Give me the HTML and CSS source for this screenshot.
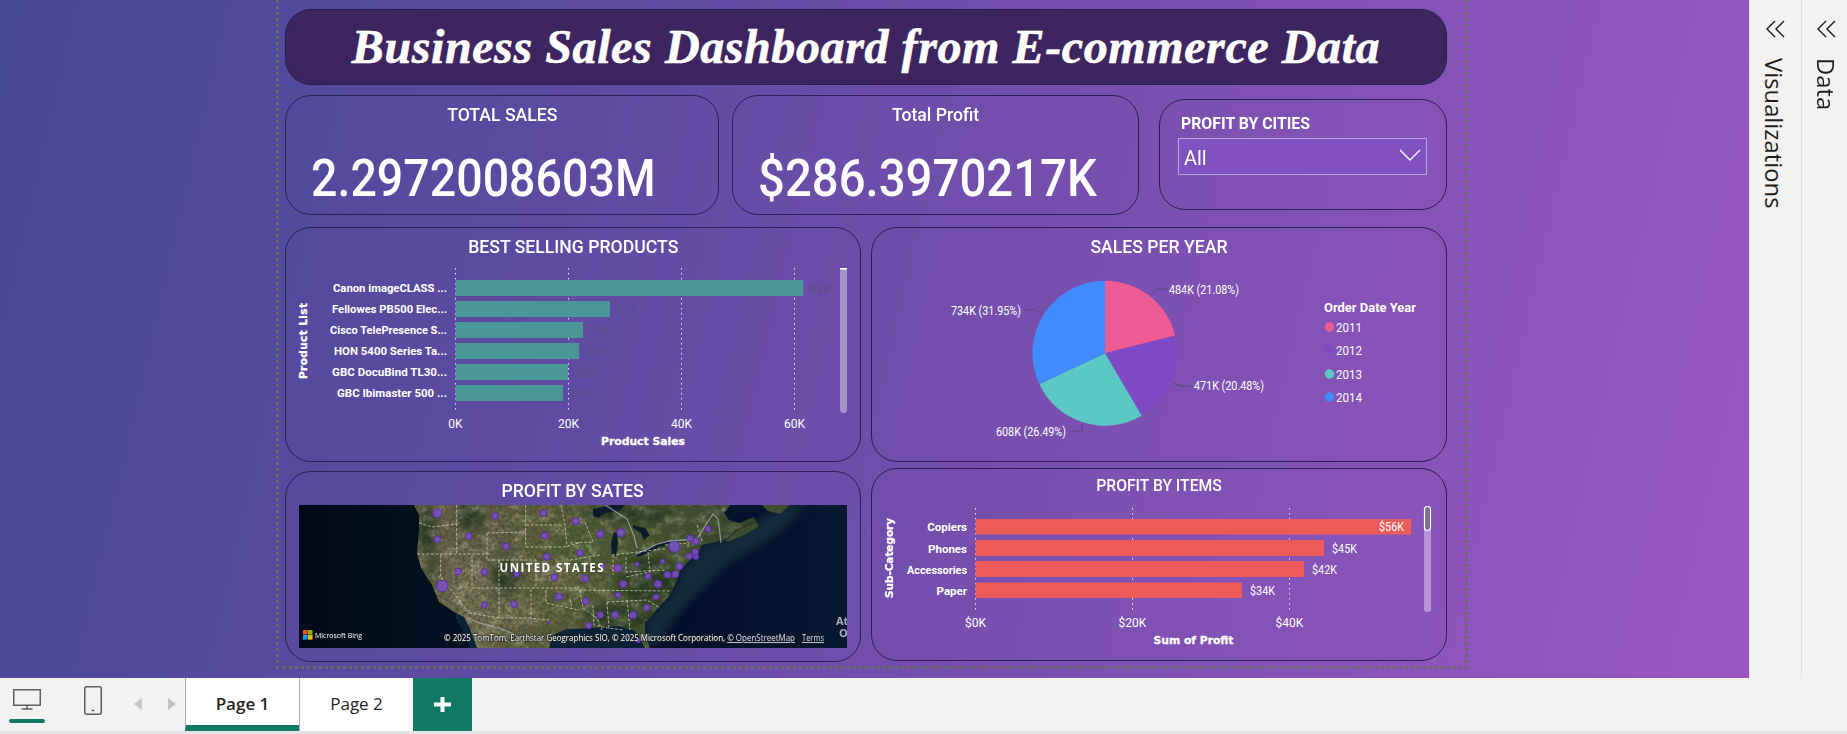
FILE: index.html
```html
<!DOCTYPE html>
<html lang="en">
<head>
<meta charset="utf-8">
<title>Business Sales Dashboard</title>
<link rel="stylesheet" href="styles.css">
</head>
<body>
<div class="app">
  <div class="workspace">
    <main class="canvas">
      <div class="page">
        <header class="banner card"><h1>Business Sales Dashboard from E-commerce Data</h1></header>

        <section class="row row-kpi">
          <article class="card kpi kpi-sales">
            <h2 class="kpi-label"><span>TOTAL SALES</span></h2>
            <p class="kpi-value"><span>2.2972008603M</span></p>
          </article>
          <article class="card kpi kpi-profit">
            <h2 class="kpi-label"><span>Total Profit</span></h2>
            <p class="kpi-value"><span>$286.3970217K</span></p>
          </article>
          <article class="card slicer">
            <h2 class="slicer-title"><span>PROFIT BY CITIES</span></h2>
            <div class="dropdown">
              <span class="dropdown-value">All</span>
              <svg class="dropdown-chevron" width="22" height="12" viewBox="0 0 22 12"><path d="M1 1l10 10L21 1"/></svg>
            </div>
          </article>
        </section>

        <section class="row row-charts">
          <article class="card chart">
            <h2 class="chart-title"><span>BEST SELLING PRODUCTS</span></h2>
            <svg class="plot" width="574" height="195" viewBox="286 266 574 195">
              <g class="grid">
                <line x1="455.5" y1="268" x2="455.5" y2="413"/><line x1="568.5" y1="268" x2="568.5" y2="413"/>
                <line x1="681.5" y1="268" x2="681.5" y2="413"/><line x1="794.5" y1="268" x2="794.5" y2="413"/>
              </g>
              <g class="bars-teal">
                <rect x="455.5" y="280" width="347.5" height="16"/><rect x="455.5" y="301" width="154.5" height="16"/>
                <rect x="455.5" y="322" width="127.5" height="16"/><rect x="455.5" y="343" width="123.5" height="16"/>
                <rect x="455.5" y="364" width="112.5" height="16"/><rect x="455.5" y="385" width="107.5" height="16"/>
              </g>
              <g class="cat">
                <text x="447" y="292" textLength="114" lengthAdjust="spacingAndGlyphs">Canon imageCLASS ...</text>
                <text x="447" y="313" textLength="115" lengthAdjust="spacingAndGlyphs">Fellowes PB500 Elec...</text>
                <text x="447" y="334" textLength="117" lengthAdjust="spacingAndGlyphs">Cisco TelePresence S...</text>
                <text x="447" y="355" textLength="113" lengthAdjust="spacingAndGlyphs">HON 5400 Series Ta...</text>
                <text x="447" y="376" textLength="115" lengthAdjust="spacingAndGlyphs">GBC DocuBind TL30...</text>
                <text x="447" y="397" textLength="110" lengthAdjust="spacingAndGlyphs">GBC Ibimaster 500 ...</text>
              </g>
              <g class="val-dim">
                <text x="810" y="293">62K</text><text x="617" y="314">27K</text><text x="590" y="335">23K</text>
                <text x="586" y="356">22K</text><text x="575" y="377">20K</text><text x="570" y="398">19K</text>
              </g>
              <g class="tick">
                <text x="455.5" y="428">0K</text><text x="568.5" y="428">20K</text><text x="681.5" y="428">40K</text><text x="794.5" y="428">60K</text>
              </g>
              <text class="axis" x="643" y="445" textLength="84" lengthAdjust="spacingAndGlyphs">Product Sales</text>
              <text class="axis axis-y" transform="translate(307 341) rotate(-90)" textLength="76" lengthAdjust="spacing">Product List</text>
              <rect class="track" x="840" y="268" width="7" height="145" rx="3.5"/>
              <rect class="cap" x="840" y="268" width="7" height="1.6"/>
            </svg>
          </article>

          <article class="card chart">
            <h2 class="chart-title"><span>SALES PER YEAR</span></h2>
            <svg class="plot" width="574" height="195" viewBox="872 266 574 195">
              <path class="slice-pink" d="M1105 353.3V280.8A72.5 72.5 0 0 1 1175.3 335.6Z"/>
              <path class="slice-purple" d="M1105 353.3L1175.3 335.6A72.5 72.5 0 0 1 1141.7 415.8Z"/>
              <path class="slice-teal" d="M1105 353.3L1141.7 415.8A72.5 72.5 0 0 1 1039.3 384Z"/>
              <path class="slice-blue" d="M1105 353.3L1039.3 384A72.5 72.5 0 0 1 1105 280.8Z"/>
              <g class="leader">
                <path d="M1150 295l6-6h11"/><path d="M1026 310h10l7 4"/><path d="M1173 383l7 3h11"/><path d="M1082 423v8h-12"/>
              </g>
              <g class="pie-label">
                <text x="1169" y="294" textLength="70" lengthAdjust="spacingAndGlyphs">484K (21.08%)</text>
                <text x="951" y="315" textLength="70" lengthAdjust="spacingAndGlyphs">734K (31.95%)</text>
                <text x="1194" y="390" textLength="70" lengthAdjust="spacingAndGlyphs">471K (20.48%)</text>
                <text x="996" y="436" textLength="70" lengthAdjust="spacingAndGlyphs">608K (26.49%)</text>
              </g>
              <text class="legend-title" x="1324" y="312" textLength="92" lengthAdjust="spacingAndGlyphs">Order Date Year</text>
              <circle class="slice-pink" cx="1329.5" cy="327" r="4.7"/>
              <circle class="slice-purple" cx="1329.5" cy="350" r="4.7"/>
              <circle class="slice-teal" cx="1329.5" cy="374" r="4.7"/>
              <circle class="slice-blue" cx="1329.5" cy="397" r="4.7"/>
              <g class="legend-item">
                <text x="1336" y="331.5" textLength="26" lengthAdjust="spacingAndGlyphs">2011</text>
                <text x="1336" y="354.5" textLength="26" lengthAdjust="spacingAndGlyphs">2012</text>
                <text x="1336" y="378.5" textLength="26" lengthAdjust="spacingAndGlyphs">2013</text>
                <text x="1336" y="401.5" textLength="26" lengthAdjust="spacingAndGlyphs">2014</text>
              </g>
            </svg>
          </article>
        </section>

        <section class="row row-lower">
          <article class="card chart chart-map">
            <h2 class="chart-title map-title"><span>PROFIT BY SATES</span></h2>
            <svg class="map" width="548" height="143" viewBox="0 0 548 143">
              <defs>
                <linearGradient id="ocean" x1="0" x2="1" y1="0" y2="0">
                  <stop offset="0" stop-color="#020a18"/><stop offset=".2" stop-color="#03101e"/>
                  <stop offset=".7" stop-color="#04102a"/><stop offset="1" stop-color="#071830"/>
                </linearGradient>
                <linearGradient id="land" x1="0" x2="1" y1="0" y2="0">
                  <stop offset="0" stop-color="#3e4a2e"/><stop offset=".12" stop-color="#5c5a40"/>
                  <stop offset=".28" stop-color="#69634a"/><stop offset=".45" stop-color="#5c5e3c"/>
                  <stop offset=".65" stop-color="#48532f"/><stop offset=".85" stop-color="#2e3f26"/>
                  <stop offset="1" stop-color="#263824"/>
                </linearGradient>
                <clipPath id="landclip">
                  <path d="M115 0l5 10v17l-2 20 4 16 11 17 7 17 17 11 8 17 7 18H351l-5-13v-13l3-2 10-12 12-13 7-15 3-10 10-10 8-7 4-8 14-3 9-2 12-10 19-8-2-5-15 6-10-3-5-7 6-8Z"/>
                </clipPath>
                <filter id="soft" x="-20%" y="-20%" width="140%" height="140%"><feGaussianBlur stdDeviation="4"/></filter>
                <filter id="softer"><feGaussianBlur stdDeviation=".45"/></filter>
                <filter id="grain" x="0" y="0" width="100%" height="100%">
                  <feTurbulence type="fractalNoise" baseFrequency=".3" numOctaves="3" seed="7"/>
                  <feColorMatrix values="0 0 0 0 0.05  0 0 0 0 0.07  0 0 0 0 0.03  2.4 0 0 0 -.85"/>
                </filter>
                <filter id="mottle" x="0" y="0" width="100%" height="100%">
                  <feTurbulence type="fractalNoise" baseFrequency=".07 .1" numOctaves="3" seed="21"/>
                  <feColorMatrix values="0 0 0 0 0.72  0 0 0 0 0.66  0 0 0 0 0.48  2.6 0 0 0 -1.15"/>
                </filter>
              </defs>
              <rect width="548" height="143" fill="url(#ocean)"/>
              <path class="shelf" d="M346 143V117l13-14 12-13 7-15 3-10 10-10 8-7 4-8 14-3 9-2 12-10 19-8 30-17h20l-30 30-50 30-40 40-30 40Z" filter="url(#soft)"/>
              <g clip-path="url(#landclip)">
                <rect width="548" height="143" fill="url(#land)"/>
                <g filter="url(#soft)">
                  <ellipse class="arid" cx="170" cy="80" rx="24" ry="26"/>
                  <ellipse class="arid" cx="205" cy="110" rx="40" ry="12"/>
                  <ellipse class="arid" cx="180" cy="130" rx="18" ry="12"/>
                  <ellipse class="arid" cx="255" cy="70" rx="22" ry="12"/>
                  <ellipse class="forest" cx="128" cy="25" rx="9" ry="26"/>
                  <ellipse class="forest" cx="135" cy="66" rx="5" ry="14"/>
                  <ellipse class="forest" cx="172" cy="10" rx="14" ry="16"/>
                  <ellipse class="forest" cx="205" cy="72" rx="14" ry="18"/>
                  <ellipse class="forest" cx="350" cy="75" rx="32" ry="24"/>
                  <ellipse class="forest" cx="330" cy="10" rx="50" ry="8"/>
                  <ellipse class="forest" cx="320" cy="112" rx="36" ry="12"/>
                  <ellipse class="farm" cx="285" cy="42" rx="30" ry="22"/>
                </g>
                <rect width="548" height="143" filter="url(#mottle)" opacity=".4"/>
                <rect width="548" height="143" filter="url(#grain)" opacity=".75"/>
              </g>
              <path class="gulf" d="M250 143l4-13 14-6 26-1 26-2 16 5 5 7 5 10Z"/>
              <path class="gulf" d="M157 108l8 4 6 12 7 19h-6l-8-17-7-12Z"/>
              <path class="land-scrap" d="M426 36l13-11 19-8 1 5-14 8-14 6ZM463 0h28l-10 9-12-3Z"/>
              <g class="lakes" filter="url(#softer)">
                <path d="M294 4l18-4h14l-6 6-14 2-7 5-5-2Z"/>
                <path d="M315 27l3 1 1 10-2 13-4-1-1-12Z"/>
                <path d="M334 20l12 3 5 7-6 5-3-7-8-5Z"/>
                <path d="M337 50l12-6 9-4 1 3-10 5-10 4Z"/>
                <path d="M357 39l10-3 5 1-6 4-8 1Z"/>
              </g>
              <g class="shoreline" filter="url(#softer)">
                <path d="M306 0l22 14 7 17 3 12"/><path d="M337 49l12-5 9-5 12-3 13-1 15-1 8-13 8-12 5 5 1 7 2 17"/>
                <path d="M168 112l12 6 20 5 15 6 8 8"/>
              </g>
              <g class="borders" filter="url(#softer)">
                <path d="M120 18l13 4 25-3"/><path d="M157.7 0v48"/><path d="M118 49h72"/>
                <path d="M141.7 50v22l28 35"/><path d="M173 50v32"/><path d="M173 83h107"/>
                <path d="M200 55v58"/><path d="M170 108l30 5h30l20 2"/>
                <path d="M188 28l39-1"/><path d="M188 28v27h49"/><path d="M226.7 0v42"/>
                <path d="M227 20h36"/><path d="M227 42h38l15-4"/><path d="M262 0l4 20 2 22"/><path d="M237 55v28"/>
                <path d="M232 84v29"/><path d="M247 85v13l33 7"/><path d="M281 85l3 18 14 10 5 12"/>
                <path d="M286 17l8 20-23 1"/><path d="M271 55l30-5"/><path d="M271 94l2 10"/>
                <path d="M313 50l34-4 14-2 6 0"/><path d="M314 50v20"/><path d="M327 52v15l40-2"/>
                <path d="M349 47l2 20-24 5"/><path d="M271 85l100 1"/><path d="M308 97l2 27"/><path d="M308 97l40-2 13 8"/>
                <path d="M328 95l3 30"/><path d="M294 100l1 20 14 3 16 2"/><path d="M366 40l24-2"/><path d="M389 30v14"/><path d="M398 20l5 16"/>
              </g>
              <g class="bubbles">
                <circle cx="138.3" cy="8.3" r="4.5"/><circle cx="196" cy="11" r="3.3"/><circle cx="244.3" cy="8" r="3.3"/>
                <circle cx="276.7" cy="16.3" r="3.5"/><circle cx="138.3" cy="34.3" r="3.3"/><circle cx="169.7" cy="31" r="3.3"/>
                <circle cx="207" cy="41.3" r="3.3"/><circle cx="245.7" cy="30.7" r="3.3"/><circle cx="247.7" cy="51.7" r="3.3"/>
                <circle cx="159" cy="66.7" r="3.3"/><circle cx="185.3" cy="67" r="3.3"/><circle cx="217.7" cy="69" r="3"/>
                <circle cx="255.3" cy="72.3" r="3.3"/><circle cx="143.3" cy="81" r="5.6"/><circle cx="260" cy="91.7" r="3.5"/>
                <circle cx="185.3" cy="100" r="3"/><circle cx="214.7" cy="99.3" r="3.3"/><circle cx="250" cy="117.7" r="1"/>
                <circle cx="301" cy="29" r="3.5"/><circle cx="322" cy="27.7" r="4"/><circle cx="281" cy="48" r="3.2"/>
                <circle cx="304" cy="61.3" r="2.2"/><circle cx="319" cy="63" r="3.8"/><circle cx="338" cy="59.3" r="2.2"/>
                <circle cx="363.7" cy="56.3" r="2.2"/><circle cx="375.3" cy="41.7" r="5.5"/><circle cx="391" cy="33.3" r="3.2"/>
                <circle cx="396.7" cy="36.3" r="3.2"/><circle cx="409" cy="24" r="3"/><circle cx="396.3" cy="47" r="3.3"/>
                <circle cx="397" cy="51.7" r="2.7"/><circle cx="390.3" cy="51.3" r="3"/><circle cx="380.3" cy="61.3" r="3.4"/>
                <circle cx="376.3" cy="69.3" r="3.6"/><circle cx="368.3" cy="69.7" r="3.4"/><circle cx="349" cy="71.3" r="3.2"/>
                <circle cx="359" cy="79" r="3.8"/><circle cx="324.3" cy="79" r="3.6"/><circle cx="286.3" cy="73.3" r="3.3"/>
                <circle cx="319" cy="90" r="2.8"/><circle cx="356.7" cy="92" r="2.8"/><circle cx="286.7" cy="96.3" r="3.2"/>
                <circle cx="347.7" cy="102.7" r="3.2"/><circle cx="301.3" cy="110" r="3.2"/><circle cx="316" cy="109.7" r="3.4"/>
                <circle cx="334" cy="110.3" r="3.7"/><circle cx="289.7" cy="120.7" r="3.1"/><circle cx="339.3" cy="135.7" r="2.2"/>
              </g>
              <text class="map-country" x="200.5" y="67" textLength="104" lengthAdjust="spacing">UNITED STATES</text>
              <text class="map-sea" x="537" y="120">At</text>
              <text class="map-sea" x="540" y="132">O</text>
              <g>
                <rect class="ms-red" x="4" y="125" width="4.6" height="4.6"/><rect class="ms-green" x="9" y="125" width="4.6" height="4.6"/>
                <rect class="ms-blue" x="4" y="130" width="4.6" height="4.6"/><rect class="ms-yellow" x="9" y="130" width="4.6" height="4.6"/>
              </g>
              <text class="map-brand" x="16" y="132.5" textLength="47" lengthAdjust="spacingAndGlyphs">Microsoft Bing</text>
              <text class="map-attr" x="145" y="136" textLength="351" lengthAdjust="spacingAndGlyphs">© 2025 TomTom, Earthstar Geographics SIO, © 2025 Microsoft Corporation, <tspan class="map-link">© OpenStreetMap</tspan></text>
              <text class="map-attr map-link" x="503" y="136" textLength="22" lengthAdjust="spacingAndGlyphs">Terms</text>
            </svg>
          </article>

          <article class="card chart chart-items">
            <h2 class="chart-title items-title"><span>PROFIT BY ITEMS</span></h2>
            <svg class="plot" width="574" height="157" viewBox="872 503 574 157">
              <g class="grid">
                <line x1="975.5" y1="508" x2="975.5" y2="612"/><line x1="1132.5" y1="508" x2="1132.5" y2="612"/><line x1="1289.5" y1="508" x2="1289.5" y2="612"/>
              </g>
              <g class="bars-red">
                <rect x="975.5" y="519" width="435.5" height="15.5"/><rect x="975.5" y="540" width="348.5" height="16"/>
                <rect x="975.5" y="561" width="328.5" height="16"/><rect x="975.5" y="582.5" width="266.5" height="15.5"/>
              </g>
              <g class="cat">
                <text x="967" y="531">Copiers</text><text x="967" y="552.5">Phones</text>
                <text x="967" y="573.5" textLength="60" lengthAdjust="spacingAndGlyphs">Accessories</text><text x="967" y="594.5">Paper</text>
              </g>
              <g class="val">
                <text class="val-end" x="1404" y="531" textLength="25" lengthAdjust="spacingAndGlyphs">$56K</text><text x="1332" y="552.5" textLength="25" lengthAdjust="spacingAndGlyphs">$45K</text>
                <text x="1312" y="573.5" textLength="25" lengthAdjust="spacingAndGlyphs">$42K</text><text x="1250" y="594.5" textLength="25" lengthAdjust="spacingAndGlyphs">$34K</text>
              </g>
              <g class="tick">
                <text x="975.5" y="627">$0K</text><text x="1132.5" y="627">$20K</text><text x="1289.5" y="627">$40K</text>
              </g>
              <text class="axis" x="1193.5" y="644" textLength="80" lengthAdjust="spacingAndGlyphs">Sum of Profit</text>
              <text class="axis axis-y" transform="translate(893 558) rotate(-90)" textLength="80" lengthAdjust="spacingAndGlyphs">Sub-Category</text>
              <rect class="track" x="1424" y="506" width="7" height="106" rx="3.5"/>
              <rect class="thumb" x="1424.5" y="506.5" width="6" height="24" rx="3"/>
            </svg>
          </article>
        </section>
      </div>
    </main>

    <aside class="pane">
      <svg class="pane-chevron" width="19" height="18" viewBox="0 0 19 18"><path d="M9 1L1 9l8 8M18 1l-8 8 8 8"/></svg>
      <span class="pane-label">Visualizations</span>
    </aside>
    <aside class="pane">
      <svg class="pane-chevron" width="19" height="18" viewBox="0 0 19 18"><path d="M9 1L1 9l8 8M18 1l-8 8 8 8"/></svg>
      <span class="pane-label">Data</span>
    </aside>
  </div>

  <footer class="tabbar">
    <div class="view-toggle view-desktop">
      <svg width="28" height="21" viewBox="0 0 28 21"><path class="ico" d="M.75.75h26.5v15.5H.75zM14 16.5v3.5M8.5 20h11"/></svg>
      <span class="view-indicator"></span>
    </div>
    <div class="view-toggle view-phone">
      <svg width="18" height="29" viewBox="0 0 18 29"><rect class="ico" x=".75" y=".75" width="16.5" height="27.5" rx="2"/><path class="ico" d="M7.5 24.5h3"/></svg>
    </div>
    <div class="pager">
      <svg width="8" height="12" viewBox="0 0 8 12"><path class="pager-arrow" d="M8 0v12L0 6Z"/></svg>
      <svg width="8" height="12" viewBox="0 0 8 12"><path class="pager-arrow" d="M0 0v12l8-6Z"/></svg>
    </div>
    <div class="tabs">
      <div class="tab tab-active">Page 1</div>
      <div class="tab">Page 2</div>
      <div class="tab-add"><svg width="17" height="15" viewBox="0 0 17 15"><path d="M0 7.5h17M8.5 0v15"/></svg></div>
    </div>
  </footer>
</div>
</body>
</html>
```
FILE: styles.css
```css
* { box-sizing: border-box; }
html, body { margin: 0; padding: 0; }
body {
  width: 1847px;
  height: 734px;
  overflow: hidden;
  background: #f3f2f1;
  font-family: Roboto, "Liberation Sans", sans-serif;
  color: #fff;
}
h1, h2, p { margin: 0; font-weight: inherit; }

.app { display: flex; flex-direction: column; height: 734px; }
.workspace { display: flex; height: 678px; }

.canvas {
  width: 1749px;
  padding-left: 276px;
  background: linear-gradient(103deg, #474897 0%, #5d4ba2 32%, #7a50b0 62%, #9a57c4 100%);
}
.page {
  width: 1192px;
  height: 669px;
  padding: 9px 0 0 9px;
  border: 3px dotted #6b6a68;
  border-top: 0;
  display: flex;
  flex-direction: column;
}

.card {
  border: 1px solid #2a2050;
  border-radius: 26px;
}

.banner {
  width: 1162px;
  height: 76px;
  margin-left: -3px;
  background: #3d2660;
  display: flex;
  align-items: center;
  justify-content: center;
}
.banner h1 {
  font-family: "Liberation Serif", Georgia, serif;
  font-style: italic;
  font-weight: 700;
  font-size: 48px;
  line-height: 1;
  white-space: nowrap;
  letter-spacing: .6px;
  -webkit-text-stroke: .6px #fff;
}

.row { display: flex; width: 1162px; margin-left: -3px; }
.row-kpi { margin-top: 10px; height: 121px; }
.row-charts { margin-top: 11px; gap: 10px; }
.row-lower { gap: 10px; }

.kpi { height: 120px; text-align: center; }
.kpi-sales { width: 434px; }
.kpi-profit { width: 407px; margin-left: 13px; }
.kpi-label {
  margin-top: 7px;
  height: 24px;
  font-size: 18px;
  line-height: 24px;
  font-weight: 500;
}
.kpi-label span { display: inline-block; transform: scaleX(.98); }
.kpi-value {
  margin-top: 25px;
  padding-left: 25px;
  text-align: left;
  font-size: 52px;
  line-height: 54px;
  font-weight: 500;
  white-space: nowrap;
}
.kpi-value span { display: inline-block; transform: scaleX(.895); transform-origin: left center; }
.kpi-profit .kpi-value span { transform: scaleX(.91); }

.slicer { width: 288px; height: 111px; margin: 4px 0 0 20px; padding: 13px 19px 0 18px; }
.slicer-title { height: 22px; padding-left: 3px; font-size: 16px; line-height: 22px; font-weight: 700; white-space: nowrap; }
.slicer-title span { display: inline-block; transform: scaleX(.99); transform-origin: left center; }
.dropdown {
  margin-top: 3px;
  height: 37px;
  padding: 0 5px 0 5px;
  background: #8050c0;
  border: 1.5px solid #b9a4dc;
  display: flex;
  align-items: center;
  justify-content: space-between;
}
.dropdown-value { font-size: 21px; padding-top: 2px; transform: scaleX(.95); transform-origin: left center; }
.dropdown-chevron { margin-bottom: 3px; }
.dropdown-chevron path { fill: none; stroke: #fff; stroke-width: 1.4; }

.chart { width: 576px; height: 235px; }
.chart-title {
  height: 38px;
  text-align: center;
  font-size: 18px;
  line-height: 38px;
  font-weight: 500;
}
.chart-title span { display: inline-block; transform: scaleX(.98); white-space: nowrap; }
.plot { display: block; }

.chart-map { height: 191px; margin-top: 9px; }
.map-title { height: 33px; line-height: 38px; font-size: 18px; }
.map { display: block; margin-left: 13px; }
.chart-items { height: 193px; margin-top: 6px; }
.items-title { height: 34px; font-size: 16px; line-height: 34px; }

.grid line { stroke: #fff; stroke-width: 1; stroke-dasharray: 1.5 3.5; opacity: .85; }
.bars-teal rect { fill: #4b9696; }
.bars-red rect { fill: #ec5a5a; }
.cat text { font-family: Roboto, sans-serif; font-weight: 700; font-size: 11.5px; fill: #fff; text-anchor: end; }
.val-dim text { font-family: Roboto, sans-serif; font-size: 12px; fill: #5d4f85; }
.val text { font-family: Roboto, sans-serif; font-size: 12.5px; fill: #fff; }
.val .val-end { text-anchor: end; }
.tick text { font-family: Roboto, sans-serif; font-size: 12px; fill: #fff; text-anchor: middle; }
.axis { font-family: "DejaVu Sans", sans-serif; font-weight: 700; font-size: 11px; fill: #fff; stroke: #fff; stroke-width: .3px; text-anchor: middle; }
.axis-y { font-size: 10.5px; }
.track { fill: #fff; fill-opacity: .38; }
.cap { fill: #fff; }
.thumb { fill: #7a6a9c; stroke: #fff; stroke-width: 1.2; }

.slice-pink { fill: #ee5c96; }
.slice-purple { fill: #7f4bc4; }
.slice-teal { fill: #5cc8c4; }
.slice-blue { fill: #3f8cff; }
.leader path { fill: none; stroke: #5a4a78; stroke-width: 1; }
.pie-label text { font-family: Roboto, sans-serif; font-size: 12px; fill: #fff; }
.legend-title { font-family: Roboto, sans-serif; font-size: 12.5px; font-weight: 700; fill: #fff; }
.legend-item text { font-family: Roboto, sans-serif; font-size: 13px; fill: #fff; }

.shelf { fill: #12303f; opacity: .8; }
.arid { fill: #857a5e; opacity: .6; }
.forest { fill: #1f311b; opacity: .85; }
.farm { fill: #505e32; opacity: .8; }
.gulf { fill: #0a2236; }
.land-scrap { fill: #3e4c30; }
.lakes path { fill: #0b1a2a; }
.shoreline path { fill: none; stroke: #a9aeb4; stroke-width: 1.3; opacity: .75; }
.borders path { fill: none; stroke: #d9d8c0; stroke-width: .9; stroke-dasharray: 3 1.6; opacity: .8; }
.bubbles circle { fill: #7a50c4; fill-opacity: .85; stroke: #5c2db4; stroke-width: 1; }
.map-country { font-family: "Open Sans", sans-serif; font-weight: 700; font-size: 11.5px; fill: #fff; }
.map-sea { font-family: "Open Sans", sans-serif; font-weight: 700; font-size: 11px; fill: #9fb2c0; }
.map-brand { font-family: "Open Sans", sans-serif; font-size: 8px; fill: #fff; }
.map-attr { font-family: "Open Sans", sans-serif; font-size: 8.5px; fill: #fff; paint-order: stroke; stroke: #222; stroke-width: 1.2px; }
.map-link { fill: #cfd8ff; text-decoration: underline; }
.ms-red { fill: #f25022; }
.ms-green { fill: #7fba00; }
.ms-blue { fill: #00a4ef; }
.ms-yellow { fill: #ffb900; }

.pane {
  width: 52px;
  padding-top: 20px;
  background: #f3f2f1;
  border-left: 1px solid #e1dfdd;
  display: flex;
  flex-direction: column;
  align-items: center;
  color: #1f1e1d;
}
.pane + .pane { width: 46px; padding-left: 3px; }
.pane-chevron { flex: none; }
.pane-chevron path { fill: none; stroke: #252423; stroke-width: 1.5; }
.pane-label {
  margin-top: 20px;
  margin-right: 3px;
  writing-mode: vertical-rl;
  font-family: "Open Sans", sans-serif;
  font-size: 23.8px;
  line-height: 26px;
  white-space: nowrap;
}
.pane + .pane .pane-label { margin-right: 0; }

.tabbar {
  height: 56px;
  display: flex;
  background: #f3f2f1;
  border-bottom: 3px solid #e6e4e2;
  color: #252423;
}
.ico { fill: none; stroke: #605e5c; stroke-width: 1.5; }
.view-toggle { display: flex; flex-direction: column; align-items: center; }
.view-desktop { width: 36px; margin-left: 9px; padding-top: 11px; }
.view-indicator { width: 36px; height: 4px; margin-top: 9px; border-radius: 2px; background: #117865; }
.view-phone { margin-left: 39px; padding-top: 8px; }
.view-phone svg { display: block; }
.pager { display: flex; gap: 26px; margin-left: 32px; padding-top: 20px; align-items: flex-start; }
.pager-arrow { fill: #c8c6c4; }
.tabs { display: flex; margin-left: 9px; height: 53px; }
.tab {
  width: 114px;
  height: 53px;
  background: #fff;
  border-left: 1px solid #b3b0ad;
  font-family: "Open Sans", sans-serif;
  font-size: 17px;
  line-height: 52px;
  text-align: center;
}
.tab-active { font-weight: 600; border-bottom: 6px solid #117865; }
.tab-add {
  width: 59px;
  background: #117865;
  display: flex;
  align-items: center;
  justify-content: center;
}
.tab-add path { fill: none; stroke: #fff; stroke-width: 4; }
```
